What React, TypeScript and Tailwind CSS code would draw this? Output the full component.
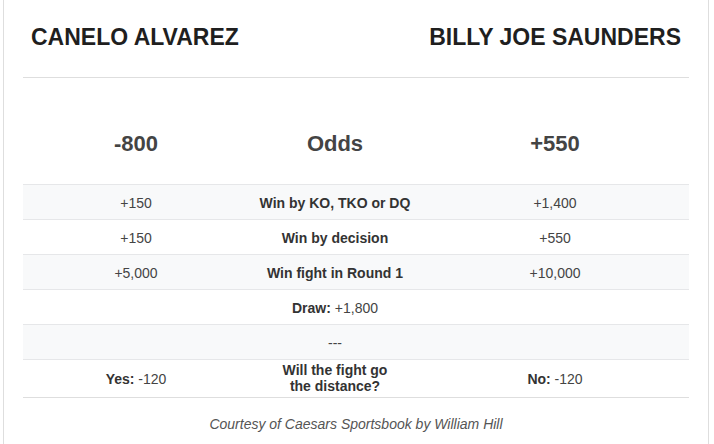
import React from "react";

const rowBase =
  "grid grid-cols-[226px_172px_268px] items-center border-t border-[#e6e7e9] text-[14px] leading-[20px] text-[#444]";

type Row = { l: React.ReactNode; m: React.ReactNode; r: React.ReactNode };

const rows: Row[] = [
  { l: "+150", m: <b className="text-[#333]">Win by KO, TKO or DQ</b>, r: "+1,400" },
  { l: "+150", m: <b className="text-[#333]">Win by decision</b>, r: "+550" },
  { l: "+5,000", m: <b className="text-[#333]">Win fight in Round 1</b>, r: "+10,000" },
  {
    l: "",
    m: (
      <span>
        <b className="text-[#333]">Draw:</b> +1,800
      </span>
    ),
    r: "",
  },
  { l: "", m: "---", r: "" },
];

export default function App() {
  return (
    <div
      className="h-[444px] w-[714px] overflow-hidden bg-white"
      style={{ fontFamily: '"Liberation Sans", Arial, sans-serif' }}
    >
      <div className="ml-[3px] h-[444px] w-[706px] border-x border-[#dedede] px-[19px]">
        {/* Header names */}
        <div className="flex justify-between border-b border-[#dedede] px-[8px] pb-[26px] pt-[23px] text-[23px] font-bold leading-[28px] text-[#1f1f1f]">
          <span>CANELO ALVAREZ</span>
          <span>BILLY JOE SAUNDERS</span>
        </div>

        {/* Odds header */}
        <div className="grid grid-cols-[226px_172px_268px] pb-[26px] pt-[52px] text-[22px] font-bold leading-[28px] text-[#444]">
          <div className="text-center">-800</div>
          <div className="text-center">Odds</div>
          <div className="text-center">+550</div>
        </div>

        {/* Table */}
        <div className="border-b border-[#dedede]">
          {rows.map((row, i) => (
            <div
              key={i}
              className={`${rowBase} min-h-[35px] pt-[1px] ${i % 2 === 0 ? "bg-[#f8f9fa]" : "bg-white"}`}
            >
              <div className="text-center">{row.l}</div>
              <div className="text-center">{row.m}</div>
              <div className="text-center">{row.r}</div>
            </div>
          ))}
          <div className={`${rowBase} bg-white`}>
            <div className="text-center">
              <b className="text-[#333]">Yes:</b> -120
            </div>
            <div className="pb-[3px] pt-[2px] text-center leading-[16px]">
              <b className="mx-auto block max-w-[120px] text-[#333]">Will the fight go the distance?</b>
            </div>
            <div className="text-center">
              <b className="text-[#333]">No:</b> -120
            </div>
          </div>
        </div>

        {/* Footer */}
        <div className="pt-[16px] text-center text-[14px] italic leading-[20px] text-[#555]">
          Courtesy of Caesars Sportsbook by William Hill
        </div>
      </div>
    </div>
  );
}
